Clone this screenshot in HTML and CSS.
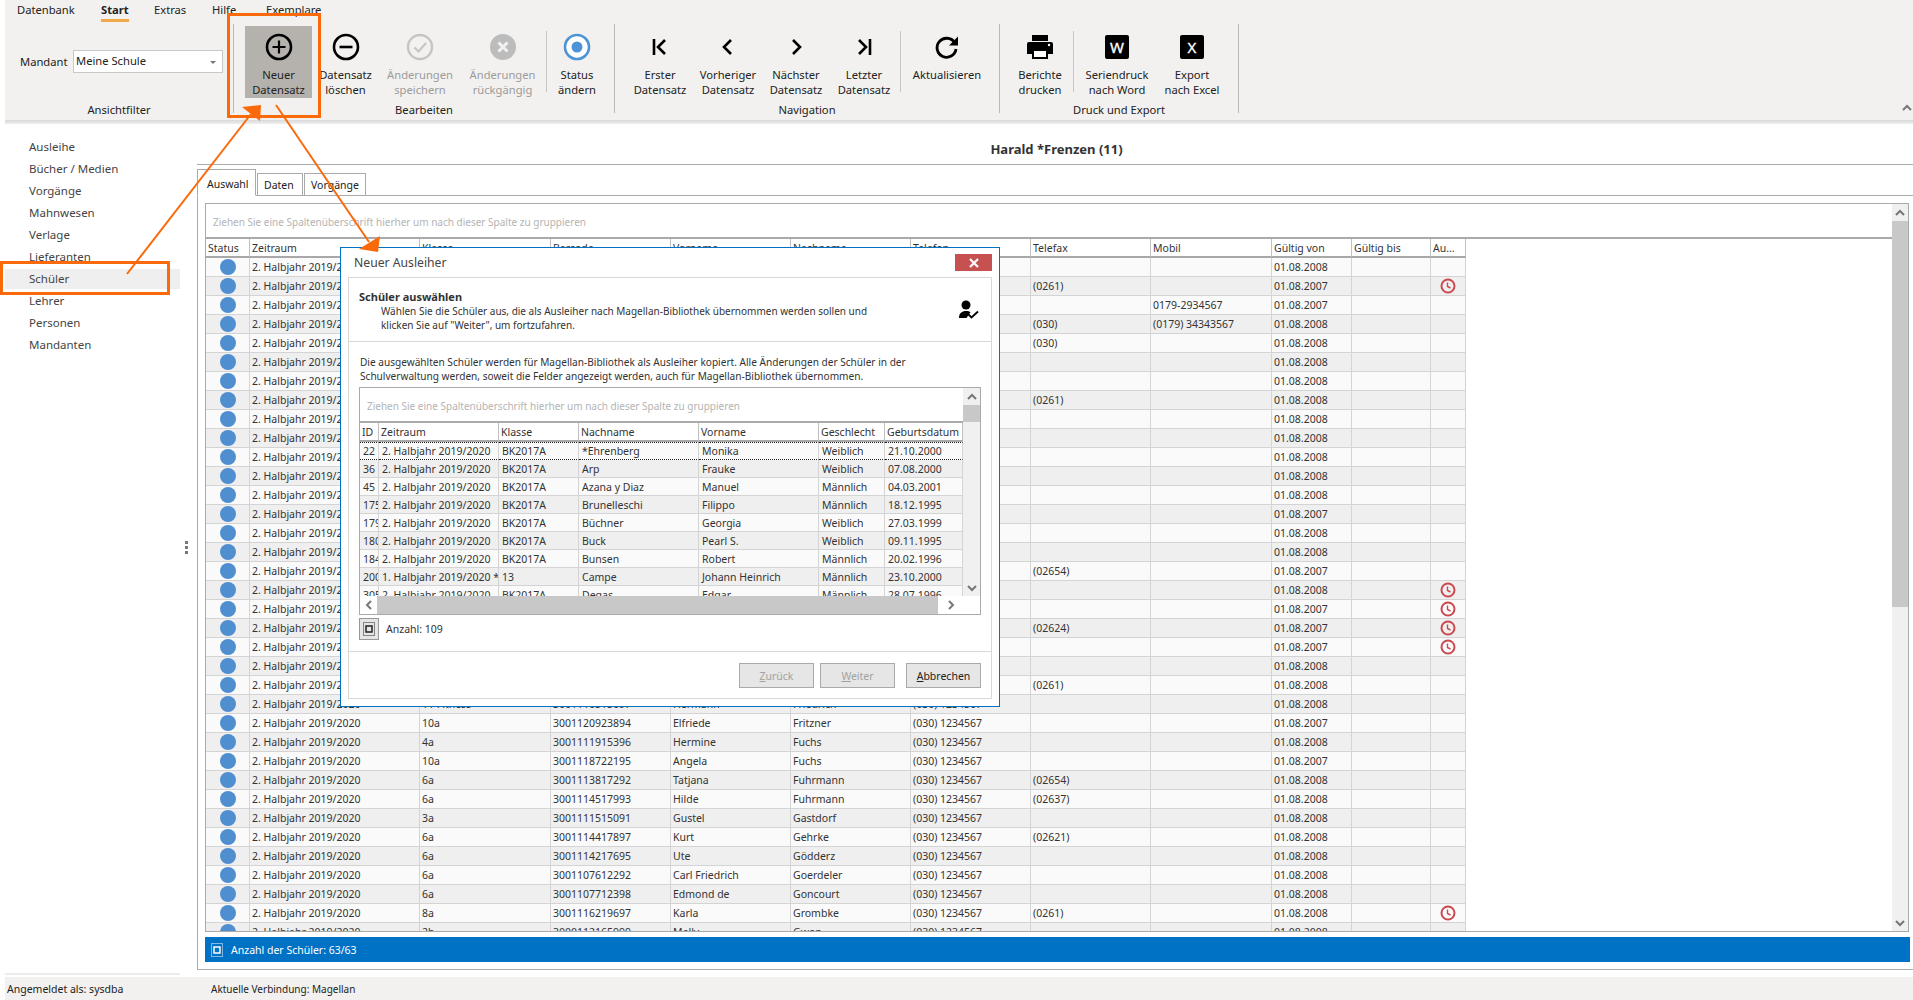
FILE: index.html
```html
<!DOCTYPE html>
<html lang="de">
<head>
    <meta charset="UTF-8">
    <link rel="stylesheet" href="styles.css">
    <title>Magellan Bibliothek</title>
</head>
<body>
    <svg class="defs">
        <symbol id="clock" viewBox="0 0 16 16"><circle cx="8" cy="8" r="6.5" fill="none" stroke="#cb4a50" stroke-width="2"/><path d="M7.5 4.5V8.5L10.5 10" fill="none" stroke="#cb4a50" stroke-width="1.4"/></symbol>
        <symbol id="up" viewBox="0 0 10 10"><path d="M1 7L5 3L9 7" fill="none" stroke="#777" stroke-width="2"/></symbol>
        <symbol id="down" viewBox="0 0 10 10"><path d="M1 3L5 7L9 3" fill="none" stroke="#777" stroke-width="2"/></symbol>
        <symbol id="left" viewBox="0 0 10 10"><path d="M7 1L3 5L7 9" fill="none" stroke="#777" stroke-width="2"/></symbol>
        <symbol id="right" viewBox="0 0 10 10"><path d="M3 1L7 5L3 9" fill="none" stroke="#777" stroke-width="2"/></symbol>
        <symbol id="summary" viewBox="0 0 12 14"><rect x="0.5" y="0.5" width="11" height="13" fill="none" stroke="currentColor" stroke-dasharray="1 1"/><rect x="3" y="4" width="6" height="6" fill="none" stroke="currentColor" stroke-width="1.5"/></symbol>
    </svg>

    <div class="app">
        <!-- Ribbon -->
        <header class="ribbon">
            <nav class="rb-tabs">
                <span class="rb-tab rb-tab1">Datenbank</span>
                <span class="rb-tab rb-tab2 active">Start</span>
                <span class="rb-tab rb-tab3">Extras</span>
                <span class="rb-tab rb-tab4">Hilfe</span>
                <span class="rb-tab">Exemplare</span>
            </nav>
            <div class="rb-groups">
                <section class="rb-group group-filter">
                    <div class="rb-buttons mandant">
                        <span class="mandant__label">Mandant</span>
                        <div class="combo">Meine Schule<span class="combo__caret"></span></div>
                    </div>
                    <div class="rb-label">Ansichtfilter</div>
                </section>

                <section class="rb-group group-edit">
                    <div class="rb-buttons">
                        <div class="rb-btn w67 selected">
                            <span class="rb-icon"><svg width="28" height="28" viewBox="0 0 28 28" fill="none" stroke="#000"><circle cx="14" cy="14" r="12" stroke-width="2.6"/><path d="M14 7.5V20.5M7.5 14H20.5" stroke-width="2.2"/></svg></span>
                            <span>Neuer<br>Datensatz</span>
                        </div>
                        <div class="rb-btn w67">
                            <span class="rb-icon"><svg width="28" height="28" viewBox="0 0 28 28" fill="none" stroke="#000"><circle cx="14" cy="14" r="12" stroke-width="2.6"/><path d="M7.5 14H20.5" stroke-width="2.6"/></svg></span>
                            <span>Datensatz<br>löschen</span>
                        </div>
                        <div class="rb-btn w82 disabled">
                            <span class="rb-icon"><svg width="28" height="28" viewBox="0 0 28 28" fill="none" stroke="#c4c4c4"><circle cx="14" cy="14" r="12" stroke-width="2.4"/><path d="M8.5 14.5L12.5 18.5L20 10" stroke-width="2"/></svg></span>
                            <span>Änderungen<br>speichern</span>
                        </div>
                        <div class="rb-btn w83 disabled">
                            <span class="rb-icon"><svg width="28" height="28" viewBox="0 0 28 28"><circle cx="14" cy="14" r="13" fill="#bcbcbc"/><path d="M9.5 9.5L18.5 18.5M18.5 9.5L9.5 18.5" stroke="#f2f1ef" stroke-width="3"/></svg></span>
                            <span>Änderungen<br>rückgängig</span>
                        </div>
                        <span class="rb-sep sep-status"></span>
                        <div class="rb-btn w60">
                            <span class="rb-icon"><svg width="28" height="28" viewBox="0 0 28 28"><circle cx="14" cy="14" r="12" fill="#fff" stroke="#4c94d6" stroke-width="2.6"/><circle cx="14" cy="14" r="5.5" fill="#4c94d6"/></svg></span>
                            <span>Status<br>ändern</span>
                        </div>
                    </div>
                    <div class="rb-label">Bearbeiten</div>
                </section>

                <section class="rb-group group-nav">
                    <div class="rb-buttons">
                        <div class="rb-btn w68">
                            <span class="rb-icon"><svg width="20" height="20" viewBox="0 0 20 20" fill="none" stroke="#000" stroke-width="2.6"><path d="M4 2V18M15 3L8 10L15 17"/></svg></span>
                            <span>Erster<br>Datensatz</span>
                        </div>
                        <div class="rb-btn w68">
                            <span class="rb-icon"><svg width="20" height="20" viewBox="0 0 20 20" fill="none" stroke="#000" stroke-width="2.6"><path d="M13 3L6 10L13 17"/></svg></span>
                            <span>Vorheriger<br>Datensatz</span>
                        </div>
                        <div class="rb-btn w68">
                            <span class="rb-icon"><svg width="20" height="20" viewBox="0 0 20 20" fill="none" stroke="#000" stroke-width="2.6"><path d="M7 3L14 10L7 17"/></svg></span>
                            <span>Nächster<br>Datensatz</span>
                        </div>
                        <div class="rb-btn w68">
                            <span class="rb-icon"><svg width="20" height="20" viewBox="0 0 20 20" fill="none" stroke="#000" stroke-width="2.6"><path d="M16 2V18M5 3L12 10L5 17"/></svg></span>
                            <span>Letzter<br>Datensatz</span>
                        </div>
                        <span class="rb-sep sep-refresh"></span>
                        <div class="rb-btn w86">
                            <span class="rb-icon"><svg width="26" height="26" viewBox="0 0 26 26" fill="none"><path d="M20.5 8.5A9.5 9.5 0 1 0 22 15" stroke="#000" stroke-width="2.8"/><path d="M24 2.5V11.5H15Z" fill="#000"/></svg></span>
                            <span>Aktualisieren</span>
                        </div>
                    </div>
                    <div class="rb-label">Navigation</div>
                </section>

                <section class="rb-group group-export">
                    <div class="rb-buttons">
                        <div class="rb-btn w64">
                            <span class="rb-icon"><svg width="28" height="26" viewBox="0 0 28 26"><path d="M6 1H22V7H6Z" fill="#000"/><path d="M3 8H25Q27 8 27 10V20H22V15H6V20H1V10Q1 8 3 8Z" fill="#000"/><path d="M7 16H21V24H7Z" fill="#fff" stroke="#000" stroke-width="2"/><circle cx="23" cy="11" r="1.2" fill="#fff"/></svg></span>
                            <span>Berichte<br>drucken</span>
                        </div>
                        <span class="rb-sep sep-word"></span>
                        <div class="rb-btn w82">
                            <span class="rb-icon"><span class="doc-icon">W</span></span>
                            <span>Seriendruck<br>nach Word</span>
                        </div>
                        <div class="rb-btn w68">
                            <span class="rb-icon"><span class="doc-icon">X</span></span>
                            <span>Export<br>nach Excel</span>
                        </div>
                    </div>
                    <div class="rb-label">Druck und Export</div>
                </section>

                <svg class="rb-collapse" width="10" height="10"><use href="#up"/></svg>
            </div>
        </header>
        <div class="ribbon-edge"></div>

        <div class="workspace">
            <!-- Linke Navigation -->
            <aside class="sidebar">
                <div class="sidebar__main">
                    <ul class="side-nav">
                        <li>Ausleihe</li>
                        <li>Bücher / Medien</li>
                        <li>Vorgänge</li>
                        <li>Mahnwesen</li>
                        <li>Verlage</li>
                        <li>Lieferanten</li>
                        <li class="current">Schüler</li>
                        <li>Lehrer</li>
                        <li>Personen</li>
                        <li>Mandanten</li>
                    </ul>
                    <div class="splitter"><i></i><i></i><i></i></div>
                </div>
                <div class="sidebar__rule"></div>
            </aside>

            <main class="content">
                <div class="content__title">Harald *Frenzen (11)</div>
                <div class="tabs">
                    <span class="tab active">Auswahl</span>
                    <span class="tab">Daten</span>
                    <span class="tab">Vorgänge</span>
                </div>
                <div class="tab-body">
                    <div class="grid-box">
                        <div class="grid-box__main">
                            <div class="group-hint">Ziehen Sie eine Spaltenüberschrift hierher um nach dieser Spalte zu gruppieren</div>
                            <div class="table-clip">
                                <table class="data main-table">
                                    <colgroup><col class="c44"><col class="c170"><col class="c131"><col class="c120"><col class="c120"><col class="c120"><col class="c120"><col class="c120"><col class="c121"><col class="c80"><col class="c79"><col class="c35"></colgroup>
                                    <thead><tr><th>Status</th><th>Zeitraum</th><th>Klasse</th><th>Barcode</th><th>Vorname</th><th>Nachname</th><th>Telefon</th><th>Telefax</th><th>Mobil</th><th>Gültig von</th><th>Gültig bis</th><th>Au...</th></tr></thead>
                                    <tbody>
                                        <tr><td><i class="dot"></i></td><td>2. Halbjahr 2019/2020</td><td></td><td></td><td></td><td></td><td></td><td></td><td></td><td>01.08.2008</td><td></td><td></td></tr>
                                        <tr><td><i class="dot"></i></td><td>2. Halbjahr 2019/2020</td><td></td><td></td><td></td><td></td><td></td><td>(0261)</td><td></td><td>01.08.2007</td><td></td><td><svg class="clock"><use href="#clock"/></svg></td></tr>
                                        <tr><td><i class="dot"></i></td><td>2. Halbjahr 2019/2020</td><td></td><td></td><td></td><td></td><td></td><td></td><td>0179-2934567</td><td>01.08.2007</td><td></td><td></td></tr>
                                        <tr><td><i class="dot"></i></td><td>2. Halbjahr 2019/2020</td><td></td><td></td><td></td><td></td><td></td><td>(030)</td><td>(0179) 34343567</td><td>01.08.2008</td><td></td><td></td></tr>
                                        <tr><td><i class="dot"></i></td><td>2. Halbjahr 2019/2020</td><td></td><td></td><td></td><td></td><td></td><td>(030)</td><td></td><td>01.08.2008</td><td></td><td></td></tr>
                                        <tr><td><i class="dot"></i></td><td>2. Halbjahr 2019/2020</td><td></td><td></td><td></td><td></td><td></td><td></td><td></td><td>01.08.2008</td><td></td><td></td></tr>
                                        <tr><td><i class="dot"></i></td><td>2. Halbjahr 2019/2020</td><td></td><td></td><td></td><td></td><td></td><td></td><td></td><td>01.08.2008</td><td></td><td></td></tr>
                                        <tr><td><i class="dot"></i></td><td>2. Halbjahr 2019/2020</td><td></td><td></td><td></td><td></td><td></td><td>(0261)</td><td></td><td>01.08.2008</td><td></td><td></td></tr>
                                        <tr><td><i class="dot"></i></td><td>2. Halbjahr 2019/2020</td><td></td><td></td><td></td><td></td><td></td><td></td><td></td><td>01.08.2008</td><td></td><td></td></tr>
                                        <tr><td><i class="dot"></i></td><td>2. Halbjahr 2019/2020</td><td></td><td></td><td></td><td></td><td></td><td></td><td></td><td>01.08.2008</td><td></td><td></td></tr>
                                        <tr><td><i class="dot"></i></td><td>2. Halbjahr 2019/2020</td><td></td><td></td><td></td><td></td><td></td><td></td><td></td><td>01.08.2008</td><td></td><td></td></tr>
                                        <tr><td><i class="dot"></i></td><td>2. Halbjahr 2019/2020</td><td></td><td></td><td></td><td></td><td></td><td></td><td></td><td>01.08.2008</td><td></td><td></td></tr>
                                        <tr><td><i class="dot"></i></td><td>2. Halbjahr 2019/2020</td><td></td><td></td><td></td><td></td><td></td><td></td><td></td><td>01.08.2008</td><td></td><td></td></tr>
                                        <tr><td><i class="dot"></i></td><td>2. Halbjahr 2019/2020</td><td></td><td></td><td></td><td></td><td></td><td></td><td></td><td>01.08.2007</td><td></td><td></td></tr>
                                        <tr><td><i class="dot"></i></td><td>2. Halbjahr 2019/2020</td><td></td><td></td><td></td><td></td><td></td><td></td><td></td><td>01.08.2008</td><td></td><td></td></tr>
                                        <tr><td><i class="dot"></i></td><td>2. Halbjahr 2019/2020</td><td></td><td></td><td></td><td></td><td></td><td></td><td></td><td>01.08.2008</td><td></td><td></td></tr>
                                        <tr><td><i class="dot"></i></td><td>2. Halbjahr 2019/2020</td><td></td><td></td><td></td><td></td><td></td><td>(02654)</td><td></td><td>01.08.2007</td><td></td><td></td></tr>
                                        <tr><td><i class="dot"></i></td><td>2. Halbjahr 2019/2020</td><td></td><td></td><td></td><td></td><td></td><td></td><td></td><td>01.08.2008</td><td></td><td><svg class="clock"><use href="#clock"/></svg></td></tr>
                                        <tr><td><i class="dot"></i></td><td>2. Halbjahr 2019/2020</td><td></td><td></td><td></td><td></td><td></td><td></td><td></td><td>01.08.2007</td><td></td><td><svg class="clock"><use href="#clock"/></svg></td></tr>
                                        <tr><td><i class="dot"></i></td><td>2. Halbjahr 2019/2020</td><td></td><td></td><td></td><td></td><td></td><td>(02624)</td><td></td><td>01.08.2007</td><td></td><td><svg class="clock"><use href="#clock"/></svg></td></tr>
                                        <tr><td><i class="dot"></i></td><td>2. Halbjahr 2019/2020</td><td></td><td></td><td></td><td></td><td></td><td></td><td></td><td>01.08.2007</td><td></td><td><svg class="clock"><use href="#clock"/></svg></td></tr>
                                        <tr><td><i class="dot"></i></td><td>2. Halbjahr 2019/2020</td><td></td><td></td><td></td><td></td><td></td><td></td><td></td><td>01.08.2008</td><td></td><td></td></tr>
                                        <tr><td><i class="dot"></i></td><td>2. Halbjahr 2019/2020</td><td></td><td></td><td></td><td></td><td></td><td>(0261)</td><td></td><td>01.08.2008</td><td></td><td></td></tr>
                                        <tr><td><i class="dot"></i></td><td>2. Halbjahr 2019/2020</td><td>11 Fitness</td><td>3001110515097</td><td>Hermann</td><td>Friedrich</td><td>(030) 1234567</td><td></td><td></td><td>01.08.2008</td><td></td><td></td></tr>
                                        <tr><td><i class="dot"></i></td><td>2. Halbjahr 2019/2020</td><td>10a</td><td>3001120923894</td><td>Elfriede</td><td>Fritzner</td><td>(030) 1234567</td><td></td><td></td><td>01.08.2007</td><td></td><td></td></tr>
                                        <tr><td><i class="dot"></i></td><td>2. Halbjahr 2019/2020</td><td>4a</td><td>3001111915396</td><td>Hermine</td><td>Fuchs</td><td>(030) 1234567</td><td></td><td></td><td>01.08.2008</td><td></td><td></td></tr>
                                        <tr><td><i class="dot"></i></td><td>2. Halbjahr 2019/2020</td><td>10a</td><td>3001118722195</td><td>Angela</td><td>Fuchs</td><td>(030) 1234567</td><td></td><td></td><td>01.08.2007</td><td></td><td></td></tr>
                                        <tr><td><i class="dot"></i></td><td>2. Halbjahr 2019/2020</td><td>6a</td><td>3001113817292</td><td>Tatjana</td><td>Fuhrmann</td><td>(030) 1234567</td><td>(02654)</td><td></td><td>01.08.2008</td><td></td><td></td></tr>
                                        <tr><td><i class="dot"></i></td><td>2. Halbjahr 2019/2020</td><td>6a</td><td>3001114517993</td><td>Hilde</td><td>Fuhrmann</td><td>(030) 1234567</td><td>(02637)</td><td></td><td>01.08.2008</td><td></td><td></td></tr>
                                        <tr><td><i class="dot"></i></td><td>2. Halbjahr 2019/2020</td><td>3a</td><td>3001111515091</td><td>Gustel</td><td>Gastdorf</td><td>(030) 1234567</td><td></td><td></td><td>01.08.2008</td><td></td><td></td></tr>
                                        <tr><td><i class="dot"></i></td><td>2. Halbjahr 2019/2020</td><td>6a</td><td>3001114417897</td><td>Kurt</td><td>Gehrke</td><td>(030) 1234567</td><td>(02621)</td><td></td><td>01.08.2008</td><td></td><td></td></tr>
                                        <tr><td><i class="dot"></i></td><td>2. Halbjahr 2019/2020</td><td>6a</td><td>3001114217695</td><td>Ute</td><td>Gödderz</td><td>(030) 1234567</td><td></td><td></td><td>01.08.2008</td><td></td><td></td></tr>
                                        <tr><td><i class="dot"></i></td><td>2. Halbjahr 2019/2020</td><td>6a</td><td>3001107612292</td><td>Carl Friedrich</td><td>Goerdeler</td><td>(030) 1234567</td><td></td><td></td><td>01.08.2008</td><td></td><td></td></tr>
                                        <tr><td><i class="dot"></i></td><td>2. Halbjahr 2019/2020</td><td>6a</td><td>3001107712398</td><td>Edmond de</td><td>Goncourt</td><td>(030) 1234567</td><td></td><td></td><td>01.08.2008</td><td></td><td></td></tr>
                                        <tr><td><i class="dot"></i></td><td>2. Halbjahr 2019/2020</td><td>8a</td><td>3001116219697</td><td>Karla</td><td>Grombke</td><td>(030) 1234567</td><td>(0261)</td><td></td><td>01.08.2008</td><td></td><td><svg class="clock"><use href="#clock"/></svg></td></tr>
                                        <tr><td><i class="dot"></i></td><td>2. Halbjahr 2019/2020</td><td>2b</td><td>3000112165999</td><td>Melly</td><td>Gwon</td><td>(030) 1234567</td><td></td><td></td><td>01.08.2008</td><td></td><td></td></tr>
                                    </tbody>
                                </table>
                            </div>
                        </div>
                        <div class="vscroll main-vscroll">
                            <span class="vscroll__btn"><svg width="10" height="10"><use href="#up"/></svg></span>
                            <span class="vscroll__thumb"></span>
                            <span class="vscroll__rest"></span>
                            <span class="vscroll__btn"><svg width="10" height="10"><use href="#down"/></svg></span>
                        </div>
                    </div>
                    <div class="count-bar">
                        <svg class="sum-icon" width="12" height="14"><use href="#summary"/></svg>
                        Anzahl der Schüler: 63/63
                    </div>
                </div>
            </main>
        </div>

        <footer class="statusbar">
            <span class="statusbar__user">Angemeldet als: sysdba</span>
            <span class="statusbar__conn">Aktuelle Verbindung: Magellan</span>
        </footer>
    </div>

    <!-- Dialog -->
    <div class="dialog">
        <div class="dialog__title">
            <span>Neuer Ausleiher</span>
            <span class="dialog__close"><svg width="10" height="10" viewBox="0 0 10 10"><path d="M1 1L9 9M9 1L1 9" stroke="#fff" stroke-width="2.2"/></svg></span>
        </div>
        <div class="dialog__inner">
            <div class="dialog__head">
                <div>
                    <strong class="dialog__heading">Schüler auswählen</strong>
                    <p class="dialog__desc">Wählen Sie die Schüler aus, die als Ausleiher nach Magellan-Bibliothek übernommen werden sollen und<br>klicken Sie auf "Weiter", um fortzufahren.</p>
                </div>
                <svg class="user-check" width="22" height="20" viewBox="0 0 22 20"><circle cx="8" cy="5" r="4.5" fill="#000"/><path d="M1 18C1 13 4 11 8 11C10 11 11.5 11.4 12.5 12.2L8.5 18Z" fill="#000"/><path d="M10.5 14.5L13.5 17.5L20 11.5" fill="none" stroke="#000" stroke-width="1.8"/></svg>
            </div>
            <div class="dialog__body">
                <p class="dialog__text">Die ausgewählten Schüler werden für Magellan-Bibliothek als Ausleiher kopiert. Alle Änderungen der Schüler in der<br>Schulverwaltung werden, soweit die Felder angezeigt werden, auch für Magellan-Bibliothek übernommen.</p>
                <div class="d-grid">
                    <div class="d-grid__main">
                        <div class="group-hint">Ziehen Sie eine Spaltenüberschrift hierher um nach dieser Spalte zu gruppieren</div>
                        <div class="table-clip">
                            <table class="data dialog-table">
                                <colgroup><col class="d19"><col class="d120"><col class="d80"><col class="d120"><col class="d120"><col class="d66"><col class="d78"></colgroup>
                                <thead><tr><th>ID</th><th>Zeitraum</th><th>Klasse</th><th>Nachname</th><th>Vorname</th><th>Geschlecht</th><th>Geburtsdatum</th></tr></thead>
                                <tbody>
                                    <tr class="focused"><td>22</td><td>2. Halbjahr 2019/2020</td><td>BK2017A</td><td>*Ehrenberg</td><td>Monika</td><td>Weiblich</td><td>21.10.2000</td></tr>
                                    <tr><td>36</td><td>2. Halbjahr 2019/2020</td><td>BK2017A</td><td>Arp</td><td>Frauke</td><td>Weiblich</td><td>07.08.2000</td></tr>
                                    <tr><td>45</td><td>2. Halbjahr 2019/2020</td><td>BK2017A</td><td>Azana y Diaz</td><td>Manuel</td><td>Männlich</td><td>04.03.2001</td></tr>
                                    <tr><td>175</td><td>2. Halbjahr 2019/2020</td><td>BK2017A</td><td>Brunelleschi</td><td>Filippo</td><td>Männlich</td><td>18.12.1995</td></tr>
                                    <tr><td>179</td><td>2. Halbjahr 2019/2020</td><td>BK2017A</td><td>Büchner</td><td>Georgia</td><td>Weiblich</td><td>27.03.1999</td></tr>
                                    <tr><td>180</td><td>2. Halbjahr 2019/2020</td><td>BK2017A</td><td>Buck</td><td>Pearl S.</td><td>Weiblich</td><td>09.11.1995</td></tr>
                                    <tr><td>184</td><td>2. Halbjahr 2019/2020</td><td>BK2017A</td><td>Bunsen</td><td>Robert</td><td>Männlich</td><td>20.02.1996</td></tr>
                                    <tr><td>200</td><td>1. Halbjahr 2019/2020 *</td><td>13</td><td>Campe</td><td>Johann Heinrich</td><td>Männlich</td><td>23.10.2000</td></tr>
                                    <tr><td>305</td><td>2. Halbjahr 2019/2020</td><td>BK2017A</td><td>Degas</td><td>Edgar</td><td>Männlich</td><td>28.07.1996</td></tr>
                                </tbody>
                            </table>
                        </div>
                    </div>
                    <div class="vscroll">
                        <span class="vscroll__btn"><svg width="10" height="10"><use href="#up"/></svg></span>
                        <span class="vscroll__thumb"></span>
                        <span class="vscroll__rest"></span>
                        <span class="vscroll__btn"><svg width="10" height="10"><use href="#down"/></svg></span>
                    </div>
                    <div class="hscroll">
                        <span class="hscroll__btn"><svg width="10" height="10"><use href="#left"/></svg></span>
                        <span class="hscroll__thumb"></span>
                        <span class="hscroll__btn hscroll__btn--end"><svg width="10" height="10"><use href="#right"/></svg></span>
                    </div>
                    <div class="d-grid__corner"></div>
                </div>
                <div class="d-count">
                    <span class="d-count__btn"><svg width="12" height="14"><use href="#summary"/></svg></span>
                    Anzahl: 109
                </div>
            </div>
            <div class="dialog__foot">
                <button class="btn" disabled><u>Z</u>urück</button>
                <button class="btn" disabled><u>W</u>eiter</button>
                <button class="btn btn--cancel"><u>A</u>bbrechen</button>
            </div>
        </div>
    </div>

    <!-- Markierungen -->
    <svg class="annot" width="1913" height="1000" viewBox="0 0 1913 1000" fill="none" stroke="#fa6a0a">
        <rect x="228.5" y="14.5" width="91" height="102" stroke-width="3"/>
        <rect x="1.5" y="262.5" width="167" height="31" stroke-width="3"/>
        <path d="M127 274L251 114" stroke-width="2"/>
        <path d="M242 107L261 105L260 121Z" fill="#fa6a0a" stroke="none"/>
        <path d="M276 105L369 242" stroke-width="2"/>
        <path d="M380 236L359 249L378 252Z" fill="#fa6a0a" stroke="none"/>
    </svg>
</body>
</html>
```

FILE: styles.css
```css
/* Grundlayout */
* {
    box-sizing: border-box;
}

body {
    margin: 0;
    position: relative;
    width: 1913px;
    height: 1000px;
    overflow: hidden;
    background: #fff;
    color: #333;
    font-family: "Noto Sans", "Open Sans", sans-serif;
    font-size: 10.5px;
}

.defs {
    display: none;
}

.app {
    display: flex;
    flex-direction: column;
    height: 100vh;
}

/* Ribbon */
.ribbon {
    height: 120px;
    margin-left: 5px;
    background: #f2f1ef;
    font-size: 11.2px;
}

.ribbon-edge {
    height: 4px;
    margin-left: 5px;
    background: linear-gradient(#d9d9d9, #efefef);
}

.rb-tabs {
    display: flex;
    height: 24px;
    padding-left: 12px;
    line-height: 19px;
    color: #222;
}

.rb-tab {
    height: 22px;
}

.rb-tab1 { width: 84px; }
.rb-tab2 { width: 53px; }
.rb-tab3 { width: 58px; }
.rb-tab4 { width: 54px; }

.rb-tab.active {
    font-weight: bold;
}

.rb-tab.active::after {
    content: "";
    display: block;
    width: 28px;
    height: 3px;
    background: #f0a848;
}

.rb-groups {
    display: flex;
}

.rb-group {
    display: flex;
    flex-direction: column;
    height: 89px;
    border-right: 1px solid #b9b9b9;
}

.group-filter { width: 229px; }
.group-edit { width: 381px; padding-left: 11px; }
.group-nav { width: 385px; padding-left: 11px; }
.group-export { width: 239px; padding-left: 8px; }

.rb-buttons {
    display: flex;
    height: 73px;
}

.rb-label {
    height: 16px;
    line-height: 26px;
    text-align: center;
    color: #222;
}

.group-edit .rb-label { margin-left: -11px; }
.group-nav .rb-label { margin-left: -11px; }
.group-export .rb-label { margin-left: -8px; }

.rb-btn {
    flex: none;
    height: 72px;
    margin-top: 2px;
    text-align: center;
    line-height: 15px;
    color: #222;
}

.rb-btn.selected { background: #b5b2ae; }
.rb-btn.disabled { color: #9b9b9b; }

.rb-icon {
    display: flex;
    align-items: center;
    justify-content: center;
    height: 41px;
}

.w60 { width: 60px; }
.w64 { width: 64px; }
.w67 { width: 67px; }
.w68 { width: 68px; }
.w82 { width: 82px; }
.w83 { width: 83px; }
.w86 { width: 86px; }

.rb-sep {
    flex: none;
    width: 1px;
    height: 61px;
    margin-top: 7px;
    background: #c6c6c6;
}

.sep-status { margin-left: 2px; }
.sep-refresh { margin: 7px 3px 0 2px; }
.sep-word { margin: 7px 2px 0 1px; }

.doc-icon {
    display: block;
    width: 24px;
    height: 24px;
    border-radius: 2px;
    background: #000;
    color: #fff;
    font-size: 15px;
    line-height: 24px;
    -webkit-text-stroke: 0.3px #fff;
}

.rb-collapse {
    margin: 79px 1px 0 auto;
}

.mandant {
    padding: 26px 0 0 15px;
}

.mandant__label {
    width: 53px;
    line-height: 23px;
    color: #222;
}

.combo {
    position: relative;
    width: 150px;
    height: 23px;
    padding-left: 2px;
    border: 1px solid #c8c8c8;
    background: #fff;
    line-height: 20px;
    color: #222;
}

.combo__caret {
    position: absolute;
    right: 6px;
    top: 10px;
    border: 3px solid transparent;
    border-top-color: #777;
}

/* Hauptbereich */
.workspace {
    display: flex;
    flex: 1;
    min-height: 0;
}

.sidebar {
    display: flex;
    flex-direction: column;
    flex: none;
    width: 197px;
    padding-left: 5px;
}

.sidebar__main {
    display: flex;
    flex: 1;
    align-items: center;
}

.sidebar__rule {
    height: 2px;
    margin: 0 17px 2px 0;
    background: #ececec;
}

.side-nav {
    align-self: flex-start;
    width: 175px;
    margin: 13px 0 0;
    padding: 0;
    list-style: none;
    font-size: 11.5px;
    color: #444;
}

.side-nav li {
    height: 20px;
    margin-bottom: 2px;
    padding-left: 24px;
    line-height: 20px;
}

.side-nav .current {
    background: #efefef;
}

.splitter {
    margin-left: 5px;
}

.splitter i {
    display: block;
    width: 3px;
    height: 3px;
    margin-bottom: 2px;
    background: #777;
}

.content {
    display: flex;
    flex: 1;
    flex-direction: column;
    min-width: 0;
    margin-bottom: 7px;
}

.content__title {
    height: 41px;
    border-bottom: 1px solid #aaa;
    padding-top: 16px;
    padding-left: 3px;
    text-align: center;
    font-size: 13px;
    font-weight: bold;
    color: #333;
}

.tabs {
    display: flex;
    align-items: flex-end;
    height: 31px;
    margin-bottom: -1px;
    position: relative;
    gap: 1px;
}

.tab {
    height: 23px;
    padding: 0 6px;
    border: 1px solid #aaa;
    line-height: 23px;
    color: #222;
    background: #fff;
}

.tab:nth-child(1) { width: 59px; padding-left: 9px; }
.tab:nth-child(2) { width: 46px; }
.tab:nth-child(3) { width: 62px; }

.tab.active {
    height: 27px;
    border-bottom-color: #fff;
    line-height: 29px;
}

.tab-body {
    display: flex;
    flex: 1;
    flex-direction: column;
    min-height: 0;
    padding: 7px 3px 7px 7px;
    border-top: 1px solid #aaa;
    border-left: 1px solid #aaa;
    border-bottom: 1px solid #aaa;
}

.grid-box {
    display: flex;
    flex: 1;
    min-height: 0;
    margin-right: 1px;
    border: 1px solid #aaa;
}

.grid-box__main {
    display: flex;
    flex: 1;
    flex-direction: column;
    min-width: 0;
}

.group-hint {
    flex: none;
    height: 35px;
    padding-left: 7px;
    border-bottom: 2px solid #aaa;
    line-height: 37px;
    font-size: 10px;
    color: #b4b4b4;
}

.table-clip {
    flex: 1;
    min-height: 0;
    overflow: hidden;
}

/* Tabellen */
.data {
    table-layout: fixed;
    border-collapse: separate;
    border-spacing: 0;
}

.main-table { width: 1260px; }
.dialog-table { width: 603px; }

.data th,
.data td {
    padding: 0 0 0 3px;
    overflow: hidden;
    white-space: nowrap;
    text-align: left;
    font-weight: normal;
    border-right: 1px solid #d4d4d4;
    border-bottom: 1px solid #d4d4d4;
}

.data th {
    height: 19px;
    padding: 1px 0 0 2px;
    background: #fff;
    border-right-color: #c0c0c0;
    border-bottom: 2px solid #a8a8a8;
    text-overflow: ellipsis;
}

.main-table td { height: 19px; padding-left: 2px; }
.dialog-table td { height: 18px; }

.data tbody tr:nth-child(odd) td { background: #fafafa; }
.data tbody tr:nth-child(even) td { background: #efefef; }

.focused td {
    border-top: 1px dotted #222;
    border-bottom: 1px dotted #222 !important;
}

.c35 { width: 35px; }
.c44 { width: 44px; }
.c79 { width: 79px; }
.c80 { width: 80px; }
.c120 { width: 120px; }
.c121 { width: 121px; }
.c131 { width: 131px; }
.c170 { width: 170px; }
.d19 { width: 19px; }
.d66 { width: 66px; }
.d78 { width: 78px; }
.d80 { width: 80px; }
.d120 { width: 120px; }

.dot {
    display: block;
    width: 16px;
    height: 16px;
    margin-left: 12px;
    border-radius: 50%;
    background: #4f8fcf;
}

.clock {
    display: block;
    width: 16px;
    height: 16px;
    margin-left: 7px;
}

/* Scrollbars */
.vscroll {
    display: flex;
    flex: none;
    flex-direction: column;
    width: 17px;
    background: #f0f0f0;
}

.vscroll__btn {
    display: flex;
    align-items: center;
    justify-content: center;
    height: 17px;
    background: #f0f0f0;
}

.vscroll__thumb {
    height: 17px;
    background: #c8c8c8;
}

.main-vscroll {
    width: 16px;
}

.main-vscroll .vscroll__thumb {
    height: 386px;
}

.vscroll__rest {
    flex: 1;
}

.hscroll {
    display: flex;
    background: #fff;
}

.hscroll__btn {
    display: flex;
    align-items: center;
    justify-content: center;
    flex: none;
    width: 17px;
}

.hscroll__btn--end {
    width: 25px;
}

.hscroll__thumb {
    flex: 1;
    background: #c8c8c8;
}

.count-bar {
    display: flex;
    align-items: center;
    flex: none;
    gap: 8px;
    height: 25px;
    margin-top: 5px;
    padding-left: 6px;
    background: #0072c6;
    color: #fff;
}

.sum-icon {
    color: #fff;
}

.statusbar {
    display: flex;
    flex: none;
    height: 23px;
    margin-left: 5px;
    padding-left: 2px;
    background: #f2f1ef;
    line-height: 25px;
    color: #222;
}

.statusbar__user {
    width: 204px;
}

.statusbar__conn {
    font-size: 10px;
}

/* Dialog */
.dialog {
    position: absolute;
    left: 340px;
    top: 247px;
    display: flex;
    flex-direction: column;
    width: 660px;
    height: 460px;
    padding: 0 7px 7px;
    border: 1px solid #0072c6;
    background: #fff;
    color: #333;
}

.dialog__title {
    display: flex;
    justify-content: space-between;
    flex: none;
    height: 29px;
    padding: 6px 0 0 6px;
    font-size: 12.2px;
    color: #444;
}

.dialog__close {
    display: flex;
    align-items: center;
    justify-content: center;
    width: 37px;
    height: 17px;
    background: #c75050;
}

.dialog__inner {
    display: flex;
    flex: 1;
    flex-direction: column;
    min-height: 0;
    border: 1px solid #d8d8d8;
}

.dialog__head {
    display: flex;
    justify-content: space-between;
    flex: none;
    height: 64px;
    padding: 11px 11px 0 10px;
    border-bottom: 1px solid #d8d8d8;
}

.dialog__heading {
    display: block;
    line-height: 15px;
    font-size: 11px;
    color: #333;
}

.dialog__desc {
    margin: 0;
    padding-left: 22px;
    line-height: 14px;
    font-size: 10px;
}

.user-check {
    margin-top: 11px;
}

.dialog__body {
    flex: 1;
    min-height: 0;
    padding: 13px 10px 0;
}

.dialog__text {
    margin: 0 0 4px 1px;
    line-height: 14px;
    font-size: 10.1px;
}

.d-grid {
    display: grid;
    grid-template-columns: 603px 17px;
    grid-template-rows: 208px 18px;
    width: 622px;
    height: 228px;
    border: 1px solid #aaa;
}

.d-grid__main {
    display: flex;
    flex-direction: column;
    min-height: 0;
    overflow: hidden;
}

.d-grid__corner {
    background: #fff;
}

.d-count {
    display: flex;
    align-items: center;
    gap: 7px;
    margin-top: 3px;
}

.d-count__btn {
    display: flex;
    align-items: center;
    justify-content: center;
    width: 20px;
    height: 22px;
    border: 1px solid #999;
    background: #e6e6e6;
    color: #222;
}

.dialog__foot {
    display: flex;
    justify-content: flex-end;
    align-items: flex-start;
    flex: none;
    gap: 6px;
    height: 47px;
    padding: 11px 10px 0 0;
    border-top: 1px solid #d8d8d8;
}

.btn {
    width: 75px;
    height: 25px;
    padding: 0;
    border: 1px solid #aaa;
    background: #e6e6e6;
    font-family: inherit;
    font-size: inherit;
    color: #222;
}

.btn:disabled {
    color: #a2a2a2;
}

.btn--cancel {
    margin-left: 5px;
}

/* Pfeile und Rahmen ueber der Oberflaeche */
.annot {
    position: absolute;
    left: 0;
    top: 0;
    pointer-events: none;
}
```
